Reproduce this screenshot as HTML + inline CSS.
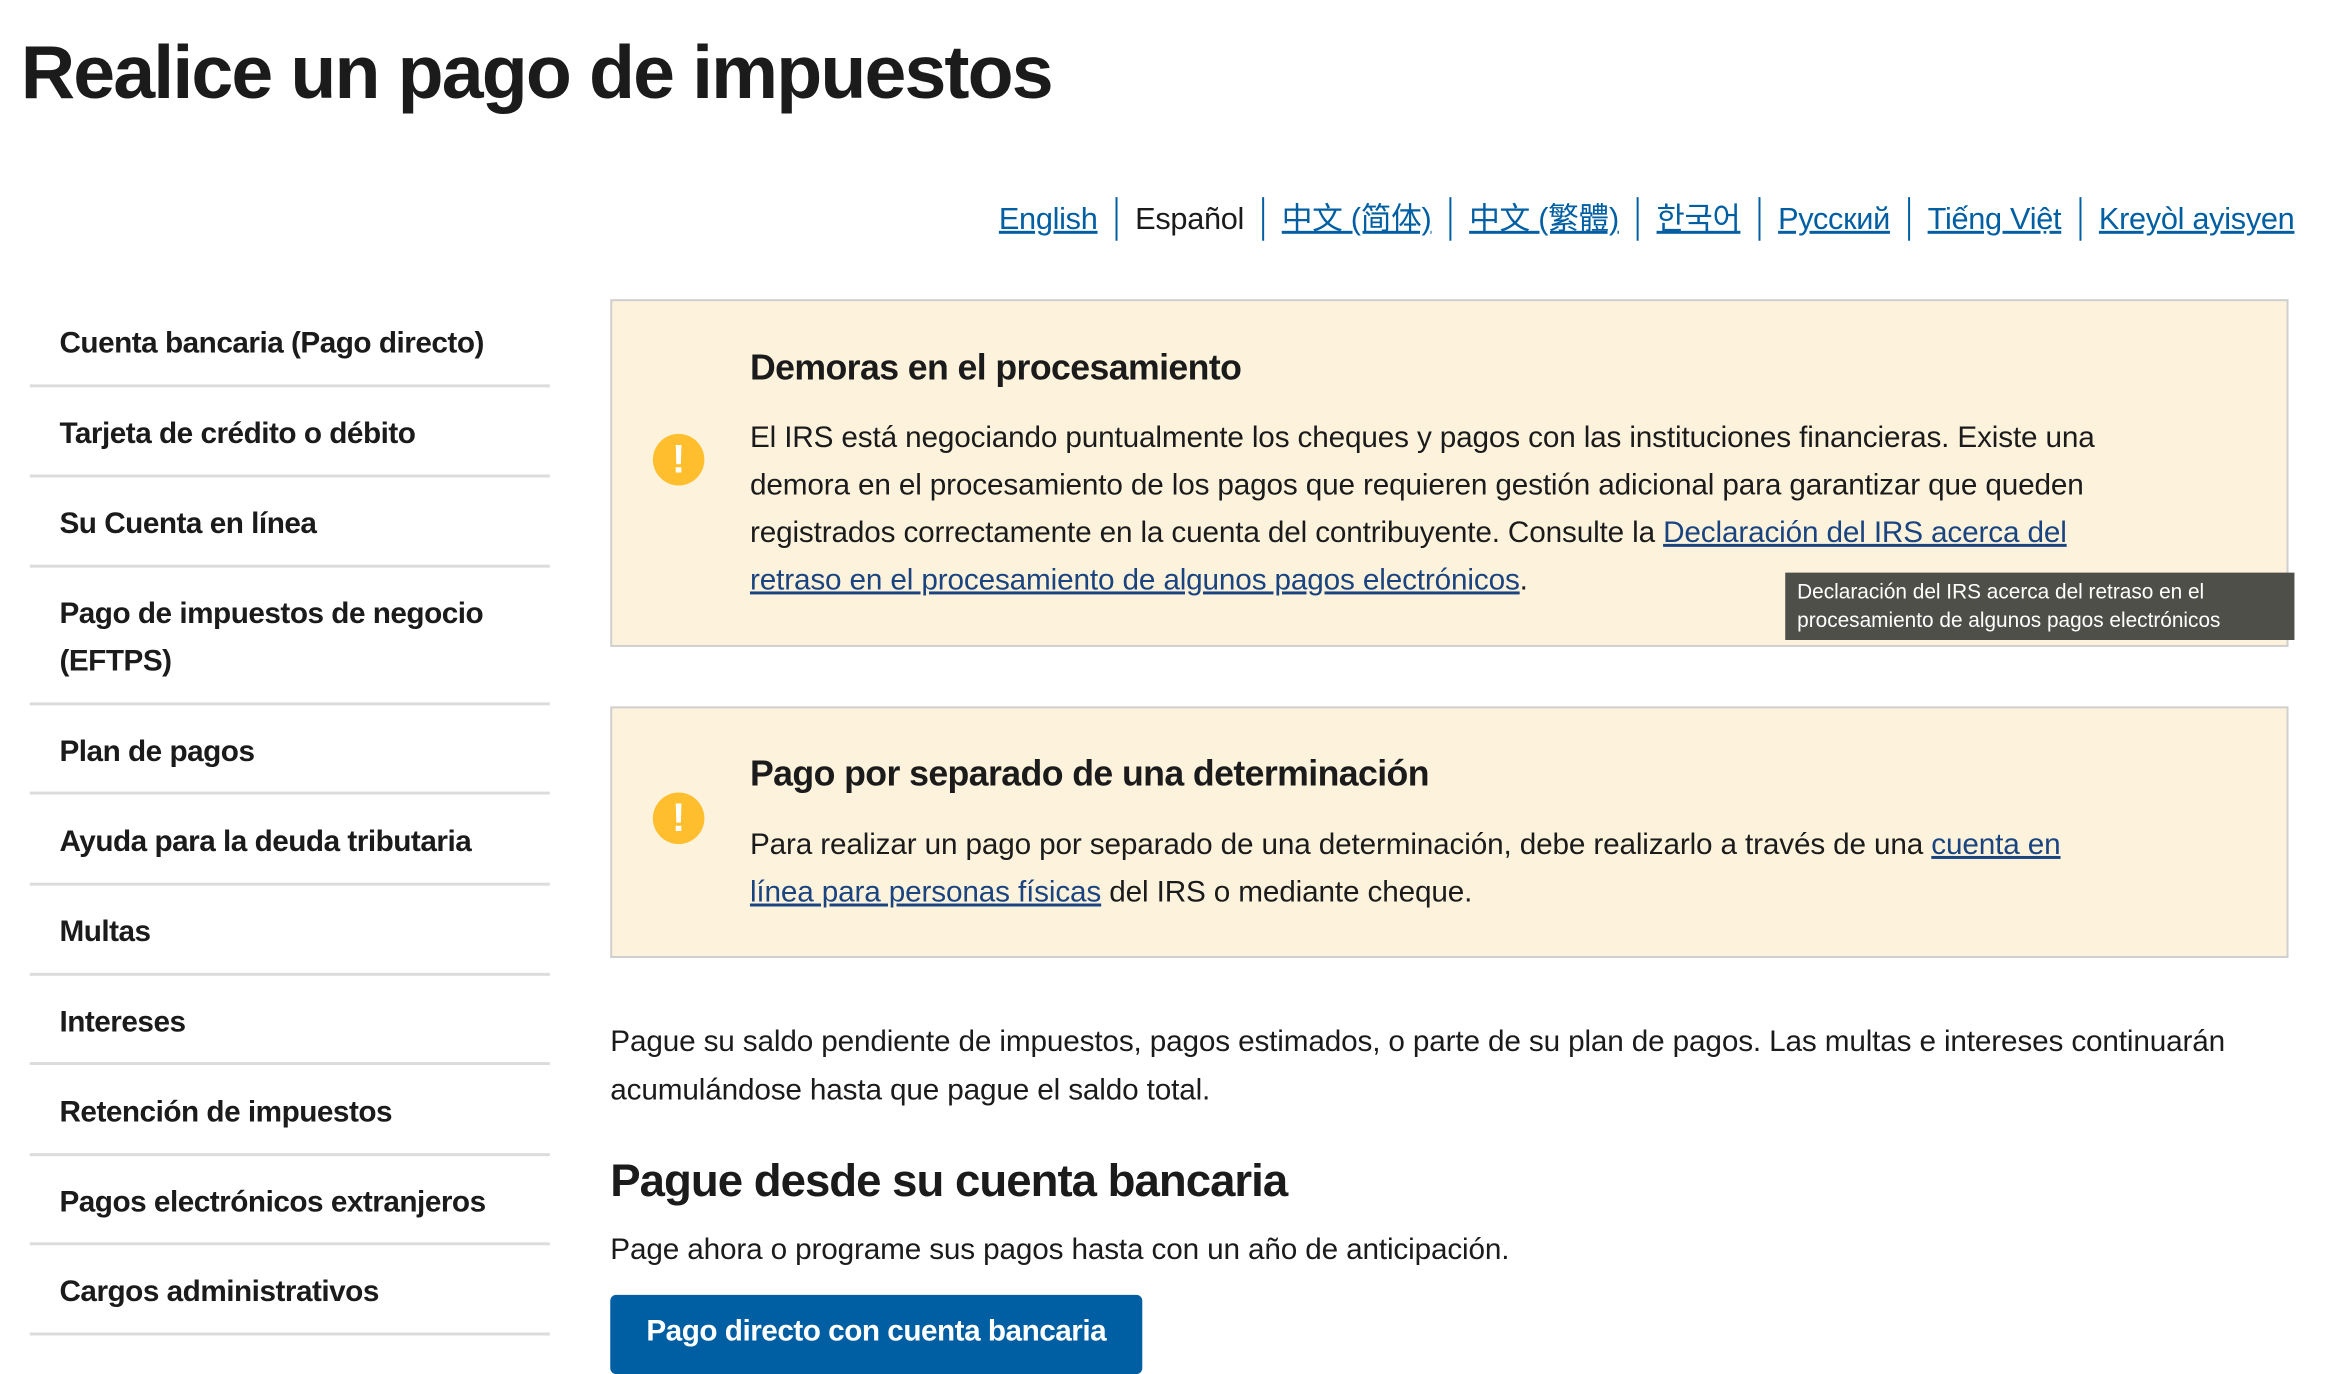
<!DOCTYPE html>
<html><head><meta charset="utf-8"><style>
*{margin:0;padding:0;box-sizing:border-box}
body{width:2330px;height:1366px;overflow:hidden;background:#fff;font-family:"Liberation Sans","Noto Sans CJK SC",sans-serif;color:#1b1b1b}
#w{position:absolute;left:0;top:0;width:2352px;height:1379px;transform:scale(0.9907);transform-origin:0 0}
.a{position:absolute;white-space:nowrap}
h1{position:absolute;left:21px;top:30px;font-size:76px;font-weight:bold;letter-spacing:-1.9px}
.lang{position:absolute;right:20px;top:197px;height:48px;display:flex;align-items:center;font-size:31px;letter-spacing:-0.3px}
.lang span{padding:0 18px;border-left:2px solid #005ea2;line-height:44px}
.lang span:first-child{border-left:none}
.lang span:last-child{padding-right:16px}
.lang a{color:#005ea2;text-decoration:underline}
.side{position:absolute;left:30px;top:304px;width:525px}
.side div{border-bottom:3px solid #dcdcdc;padding:0 30px;font-weight:bold;font-size:30px;letter-spacing:-0.5px;display:flex;align-items:center}
.box{position:absolute;left:616px;width:1694px;background:#fdf3dd;border:2px solid #cfcfcf}
.ic{position:absolute;left:41px;width:52px;height:52px;border-radius:50%;background:#ffbe2e;color:#fff;font-weight:bold;font-size:40px;text-align:center;line-height:52px}
.hd{position:absolute;left:139px;font-weight:bold;font-size:36px;letter-spacing:-0.6px}
.bd{position:absolute;left:139px;font-size:30px;line-height:48px;letter-spacing:-0.15px;width:1400px}
.bd a{color:#1a4480;text-decoration:underline}
</style></head><body><div id="w">
<h1>Realice un pago de impuestos</h1>
<div class="lang"><span><a>English</a></span><span>Español</span><span><a>中文 (简体)</a></span><span><a>中文 (繁體)</a></span><span><a>한국어</a></span><span><a>Русский</a></span><span><a>Tiếng Việt</a></span><span><a>Kreyòl ayisyen</a></span></div>
<div class="side" style="top:300px">
<div style="height:91px;padding-top:6px">Cuenta bancaria (Pago directo)</div>
<div style="height:91px;padding-top:6px">Tarjeta de crédito o débito</div>
<div style="height:91px;padding-top:6px">Su Cuenta en línea</div>
<div style="height:139px;line-height:48px;padding-top:6px">Pago de impuestos de negocio<br>(EFTPS)</div>
<div style="height:90px;padding-top:6px">Plan de pagos</div>
<div style="height:92px;padding-top:6px">Ayuda para la deuda tributaria</div>
<div style="height:91px;padding-top:6px">Multas</div>
<div style="height:90px;padding-top:6px">Intereses</div>
<div style="height:92px;padding-top:6px">Retención de impuestos</div>
<div style="height:90px;padding-top:6px">Pagos electrónicos extranjeros</div>
<div style="height:91px;padding-top:6px">Cargos administrativos</div>
</div>
<div class="box" style="top:302px;height:351px">
<div class="ic" style="top:134px">!</div>
<div class="hd" style="top:46px">Demoras en el procesamiento</div>
<div class="bd" style="top:114px">El IRS está negociando puntualmente los cheques y pagos con las instituciones financieras. Existe una demora en el procesamiento de los pagos que requieren gestión adicional para garantizar que queden registrados correctamente en la cuenta del contribuyente. Consulte la <a>Declaración del IRS acerca del retraso en el procesamiento de algunos pagos electrónicos</a>.</div>
</div>
<div class="a" style="left:1802px;top:578px;width:514px;height:68px;background:#4f4f4a;color:#fff;font-size:21px;line-height:29px;padding:5px 12px;white-space:normal">Declaración del IRS acerca del retraso en el procesamiento de algunos pagos electrónicos</div>
<div class="box" style="top:713px;height:254px">
<div class="ic" style="top:85px">!</div>
<div class="hd" style="top:45px">Pago por separado de una determinación</div>
<div class="bd" style="top:114px">Para realizar un pago por separado de una determinación, debe realizarlo a través de una <a>cuenta en<br>línea para personas físicas</a> del IRS o mediante cheque.</div>
</div>
<div class="a" style="left:616px;top:1027px;font-size:30px;line-height:49px;letter-spacing:-0.15px">Pague su saldo pendiente de impuestos, pagos estimados, o parte de su plan de pagos. Las multas e intereses continuarán<br>acumulándose hasta que pague el saldo total.</div>
<div class="a" style="left:616px;top:1164px;font-size:46px;font-weight:bold;letter-spacing:-1px">Pague desde su cuenta bancaria</div>
<div class="a" style="left:616px;top:1245px;font-size:30px;letter-spacing:-0.15px">Page ahora o programe sus pagos hasta con un año de anticipación.</div>
<div class="a" style="left:616px;top:1307px;width:537px;height:80px;background:#005ea2;border-radius:6px;color:#fff;font-weight:bold;font-size:30px;letter-spacing:-0.5px;text-align:center;line-height:74px">Pago directo con cuenta bancaria</div>
</div></body></html>
